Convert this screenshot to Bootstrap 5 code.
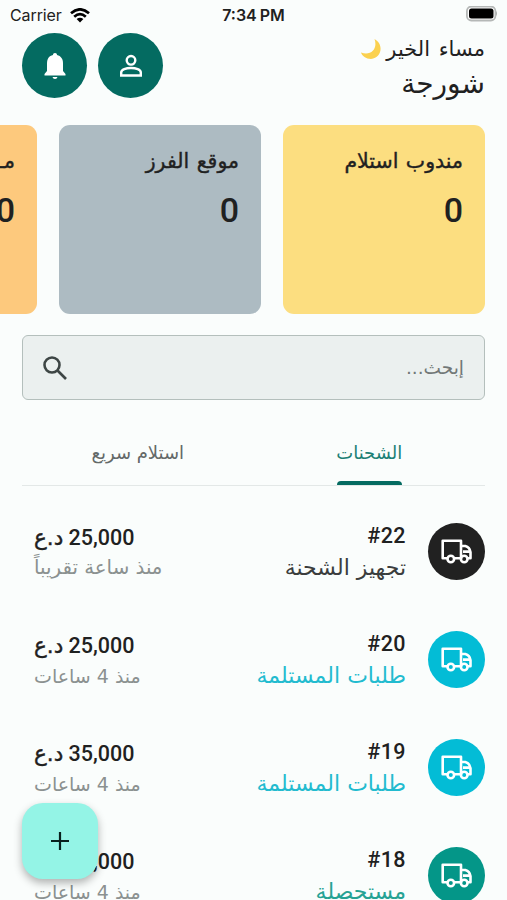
<!DOCTYPE html>
<html lang="ar" dir="rtl">
<head>
<meta charset="utf-8">
<meta name="viewport" content="width=device-width, initial-scale=1">
<title>شورجة</title>
<link rel="stylesheet" href="https://cdn.jsdelivr.net/npm/bootstrap@5.3.0/dist/css/bootstrap.min.css">
<style>
body{height:900px;background:#fafdfc;color:#1f2121;font-family:Roboto,"DejaVu Sans",sans-serif;overflow:hidden}
.app{height:900px;position:relative;overflow:hidden}
.ar{font-family:"DejaVu Sans",sans-serif;white-space:nowrap;display:block}
.med{-webkit-text-stroke:.4px currentColor}
.statusbar{height:30px;font-family:Inter,sans-serif;padding:0 10px}
.statusbar>div{flex:1 1 0}
.carrier{font-size:16px;letter-spacing:-.1px}
.clock{font-size:16px;font-weight:600;word-spacing:-1px}
.gutter{padding-left:22px;padding-right:22px}
.hero{height:95px;padding-top:3px}
.round{width:65px;height:65px;background:#046b61}
.rounds{gap:11px}
.hello{font-size:21px;line-height:32px;word-spacing:2px}
.shop{font-size:28px;line-height:38px}
.tiles{gap:22px;height:189px}
.tile{width:202px;height:189px;border-radius:11px;padding:20px 22px}
.tile .ar{font-size:20.5px;line-height:32px;word-spacing:1px}
.tile b{font-size:34px;line-height:44px;font-weight:500;display:block;margin-top:11px}
.tile-yellow{background:#fcde80}
.tile-gray{background:#adbbc2}
.tile-orange{background:#fdc97d}
.find{height:65px;margin-top:21px;background:#ebf0ef;border:1.5px solid #b4bfbc;border-radius:6px;padding:0 20px 0 19px}
.find .ar{font-size:18.5px;color:#727877}
.tabs{height:66px;margin:20px 0 28px;border-bottom:1.5px solid #e3e8e7}
.tabs .ar{font-size:18px;line-height:30px}
.tab{width:50%;padding-top:18px;color:#636968}
.tab.on{color:#1c8075}
.bar{height:4px;width:65px;margin-top:13px;background:#046b61;border-radius:4px 4px 0 0}
.ship{height:108px;padding-top:9px}
.dot{width:57px;height:57px}
.ship-main{margin-right:22px}
.num{font-size:21.5px;font-weight:500;line-height:30px;letter-spacing:.45px;margin-top:-2px}
.cost .num{margin-top:0;text-align:left;letter-spacing:.75px}
.state{font-size:22px;line-height:32px;padding-top:1px}
.when{font-size:19px;line-height:30px;color:#8b9190;text-align:left}
.when-wide{font-size:19.8px}
.cost{margin-left:12px}
.black{background:#212121}.cyan{background:#03bcd6}.green{background:#049688}
.t-black{color:#3a3d3d}.t-cyan{color:#22bbcf}.t-green{color:#26a294}
.fab{position:absolute;left:22px;top:803px;width:76px;height:76px;border-radius:21px;background:#94f4e6;box-shadow:0 4px 8px rgba(0,0,0,.3)}
</style>
</head>
<body>
<svg class="d-none"><symbol id="truck" viewBox="0 0 31 25"><g fill="none" stroke="#fff" stroke-width="2.600" stroke-linejoin="round"><path d="M6.500 19.300H1.700V1.700h18.300v17.600H13M20 7h4.300q4.500 1.200 5.200 6.200v6.100h-3.200M22 12.600h7"/><circle cx="9.800" cy="20" r="3.300"/><circle cx="23.200" cy="20" r="3.300"/></g></symbol></svg>
<div class="app">
  <div class="statusbar d-flex align-items-center" dir="ltr">
    <div class="d-flex align-items-center gap-2"><span class="carrier">Carrier</span>
      <svg width="20" height="15" viewBox="0 0 20 15"><g fill="none" stroke="#000" stroke-width="2.700"><path d="M1 5.300Q10-2.600 19 5.300"/><path d="M4.200 8.700Q10 3.500 15.800 8.700"/></g><path d="M6.600 10.900Q10 8.400 13.400 10.900L10 14.500Z"/></svg></div>
    <span class="clock">7:34 PM</span>
    <div class="d-flex justify-content-end"><svg width="32" height="18" viewBox="0 1 32 18"><rect x="1.900" y="1.500" width="28.500" height="14" rx="4.500" fill="#fff" stroke="#b5b8b7" stroke-width="1.800"/><rect x="4" y="3.500" width="24.500" height="10" rx="2.500"/><path d="M31 6q2 2.500 0 5z" fill="#aaadac"/></svg></div>
  </div>
  <header class="hero gutter d-flex justify-content-between">
    <div>
      <div class="d-flex align-items-center gap-1"><span class="ar hello">مساء الخير</span>
        <svg width="22" height="22" viewBox="0 0 22 22"><path d="M14.500 1C24 6 22 20 11 21 6 21 2 18 1 14.500 11 18 18 11 14.500 1Z" fill="#fbd14f"/></svg></div>
      <span class="ar shop">شورجة</span>
    </div>
    <div class="rounds d-flex">
      <div class="round rounded-circle d-flex align-items-center justify-content-center"><svg width="24" height="24" viewBox="0 0 24 24"><g fill="none" stroke="#fff" stroke-width="2.400"><circle cx="12" cy="6.300" r="4.300"/><path d="M2.200 21.500v-3C2.200 12.500 21.800 12.500 21.800 18.500v3Z"/></g></svg></div>
      <div class="round rounded-circle d-flex align-items-center justify-content-center"><svg width="24" height="26" viewBox="0 0 24 26"><path d="M12 0c1.300 0 2 .9 2 2.100 4 1 6 4 6 8.400v7.500l2.500 3v1.500h-21V21L4 18v-7.500C4 6 6 3 10 2.100 10 .9 10.700 0 12 0ZM9.500 24h5q-.5 2-2.500 2t-2.500-2Z" fill="#fff"/></svg></div>
    </div>
  </header>
  <section class="tiles gutter d-flex">
    <div class="tile tile-yellow flex-shrink-0"><span class="ar med">مندوب استلام</span><b>0</b></div>
    <div class="tile tile-gray flex-shrink-0"><span class="ar med">موقع الفرز</span><b>0</b></div>
    <div class="tile tile-orange flex-shrink-0"><span class="ar med">مـستلمة</span><b>0</b></div>
  </section>
  <main class="gutter">
    <div class="find d-flex align-items-center justify-content-between"><span class="ar">إبحث...</span>
      <svg width="26" height="26" viewBox="0 0 26 26" fill="none" stroke="#3e4645" stroke-width="2.600"><circle cx="10" cy="10" r="7.500"/><path d="M15.500 15.500 24 24"/></svg></div>
    <nav class="tabs d-flex">
      <div class="tab on d-flex flex-column align-items-center"><span class="ar">الشحنات</span><i class="bar"></i></div>
      <div class="tab d-flex flex-column align-items-center"><span class="ar">استلام سريع</span></div>
    </nav>
    <div class="ship d-flex">
      <div class="dot black rounded-circle d-flex align-items-center justify-content-center"><svg width="31" height="25"><use href="#truck"/></svg></div>
      <div class="ship-main flex-grow-1"><div class="num"><bdi dir="ltr">#22</bdi></div><span class="ar state t-black">تجهيز الشحنة</span></div>
      <div class="cost"><div class="num">25,000 <span class="ar med d-inline">د.ع</span></div><span class="ar when when-wide">منذ ساعة تقريباً</span></div>
    </div>
    <div class="ship d-flex">
      <div class="dot cyan rounded-circle d-flex align-items-center justify-content-center"><svg width="31" height="25"><use href="#truck"/></svg></div>
      <div class="ship-main flex-grow-1"><div class="num"><bdi dir="ltr">#20</bdi></div><span class="ar state t-cyan">طلبات المستلمة</span></div>
      <div class="cost"><div class="num">25,000 <span class="ar med d-inline">د.ع</span></div><span class="ar when">منذ 4 ساعات</span></div>
    </div>
    <div class="ship d-flex">
      <div class="dot cyan rounded-circle d-flex align-items-center justify-content-center"><svg width="31" height="25"><use href="#truck"/></svg></div>
      <div class="ship-main flex-grow-1"><div class="num"><bdi dir="ltr">#19</bdi></div><span class="ar state t-cyan">طلبات المستلمة</span></div>
      <div class="cost"><div class="num">35,000 <span class="ar med d-inline">د.ع</span></div><span class="ar when">منذ 4 ساعات</span></div>
    </div>
    <div class="ship d-flex">
      <div class="dot green rounded-circle d-flex align-items-center justify-content-center"><svg width="31" height="25"><use href="#truck"/></svg></div>
      <div class="ship-main flex-grow-1"><div class="num"><bdi dir="ltr">#18</bdi></div><span class="ar state t-green">مستحصلة</span></div>
      <div class="cost"><div class="num">25,000 <span class="ar med d-inline">د.ع</span></div><span class="ar when">منذ 4 ساعات</span></div>
    </div>
  </main>
  <div class="fab d-flex align-items-center justify-content-center"><svg width="18" height="18" viewBox="0 0 18 18" stroke="#08201d" stroke-width="2.200"><path d="M0 9h18M9 0v18"/></svg></div>
</div>
<script src="https://cdn.jsdelivr.net/npm/bootstrap@5.3.0/dist/js/bootstrap.bundle.min.js"></script>
</body>
</html>
